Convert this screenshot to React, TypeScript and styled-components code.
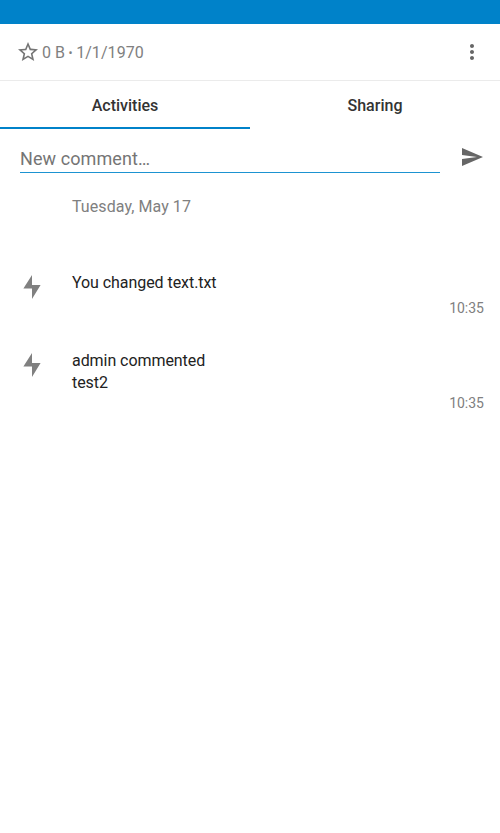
import React from "react";
import styled, { createGlobalStyle } from "styled-components";

const GlobalStyle = createGlobalStyle`
  * { box-sizing: border-box; }
  body { margin: 0; background: #fff; font-family: Roboto, sans-serif; }
`;

const Screen = styled.div`
  min-height: 100vh;
  background: #fff;
`;

const StatusBar = styled.div`
  height: 24px;
  background: #0082c9;
`;

const FileHeader = styled.header`
  display: flex;
  align-items: center;
  height: 57px;
  padding: 0 16px;
  border-bottom: 1px solid #ebebeb;
  color: #808080;
`;

const FileInfo = styled.div`
  display: flex;
  align-items: center;
  flex: 1;
  padding: 2px 0 0 2px;
  font-size: 16px;
  line-height: 22px;
  letter-spacing: 0.07px;
`;

const Separator = styled.span`
  width: 11px;
  font-size: 12px;
  text-align: center;
`;

const IconButton = styled.button`
  display: flex;
  flex: none;
  padding: 0;
  border: 0;
  background: none;
  color: #666;
`;

const Icon = styled.svg`
  display: block;
  flex: none;
  width: 24px;
  height: 24px;
  fill: currentColor;
`;

const StarIcon = styled(Icon)`
  color: #757575;
`;

const Tabs = styled.nav`
  display: grid;
  grid-template-columns: 1fr 1fr;
  height: 48px;
`;

const Tab = styled.button<{ $active?: boolean }>`
  padding: 4px 0 0;
  border: 0;
  border-bottom: 2px solid ${(p) => (p.$active ? "#0082c9" : "transparent")};
  background: none;
  color: #333;
  font: 500 16px/22px Roboto, sans-serif;
`;

const CommentForm = styled.div`
  display: flex;
  align-items: flex-start;
  justify-content: space-between;
  height: 44px;
  padding: 16px 16px 0 20px;
`;

const CommentField = styled.div`
  width: 420px;
  height: 28px;
  padding-top: 2px;
  border-bottom: 1px solid #1d93d1;
  color: #757575;
  font-size: 18px;
  line-height: 24px;
  letter-spacing: 0.08px;
`;

const DateHeading = styled.h2`
  margin: 0;
  height: 87px;
  padding: 23px 0 0 72px;
  color: #808080;
  font-size: 16px;
  font-weight: 400;
  line-height: 22px;
  letter-spacing: 0.07px;
`;

const Activity = styled.article`
  display: flex;
  padding: 12px 16px 21px 20px;
`;

const BoltIcon = styled(Icon)`
  margin-top: 3px;
  color: #808080;
`;

const ActivityBody = styled.div`
  flex: 1;
  margin-left: 28px;
`;

const Messages = styled.div`
  min-height: 27px;
`;

const Message = styled.div`
  color: #222;
  font-size: 16px;
  line-height: 22px;
  letter-spacing: -0.06px;
`;

const Time = styled.time`
  display: block;
  color: #808080;
  font-size: 14px;
  line-height: 18px;
  text-align: right;
`;

const activities = [
  { lines: ["You changed text.txt"], time: "10:35" },
  { lines: ["admin commented", "test2"], time: "10:35" },
];

export default function App() {
  return (
    <Screen>
      <GlobalStyle />
      <StatusBar />
      <FileHeader>
        <StarIcon viewBox="0 0 24 24">
          <path d="M22 9.24l-7.19-.62L12 2 9.19 8.63 2 9.24l5.46 4.73L5.82 21 12 17.27 18.18 21l-1.63-7.03L22 9.24zM12 15.4l-3.76 2.27 1-4.28-3.32-2.88 4.38-.38L12 6.1l1.71 4.04 4.38.38-3.32 2.88 1 4.28L12 15.4z" />
        </StarIcon>
        <FileInfo>
          <span>0 B</span>
          <Separator>•</Separator>
          <span>1/1/1970</span>
        </FileInfo>
        <IconButton aria-label="More options">
          <Icon viewBox="0 0 24 24">
            <path d="M12 8c1.1 0 2-.9 2-2s-.9-2-2-2-2 .9-2 2 .9 2 2 2zm0 2c-1.1 0-2 .9-2 2s.9 2 2 2 2-.9 2-2-.9-2-2-2zm0 6c-1.1 0-2 .9-2 2s.9 2 2 2 2-.9 2-2-.9-2-2-2z" />
          </Icon>
        </IconButton>
      </FileHeader>
      <Tabs>
        <Tab $active>Activities</Tab>
        <Tab>Sharing</Tab>
      </Tabs>
      <CommentForm>
        <CommentField>New comment…</CommentField>
        <IconButton aria-label="Send comment">
          <Icon viewBox="0 0 24 24">
            <path d="M2.01 21L23 12 2.01 3 2 10l15 2-15 2z" />
          </Icon>
        </IconButton>
      </CommentForm>
      <DateHeading>Tuesday, May 17</DateHeading>
      {activities.map((a, i) => (
        <Activity key={i}>
          <BoltIcon viewBox="0 0 24 24">
            <path d="M12 0L3.4 13.6H12V24L20.6 10H12z" />
          </BoltIcon>
          <ActivityBody>
            <Messages>
              {a.lines.map((line) => (
                <Message key={line}>{line}</Message>
              ))}
            </Messages>
            <Time>{a.time}</Time>
          </ActivityBody>
        </Activity>
      ))}
    </Screen>
  );
}
